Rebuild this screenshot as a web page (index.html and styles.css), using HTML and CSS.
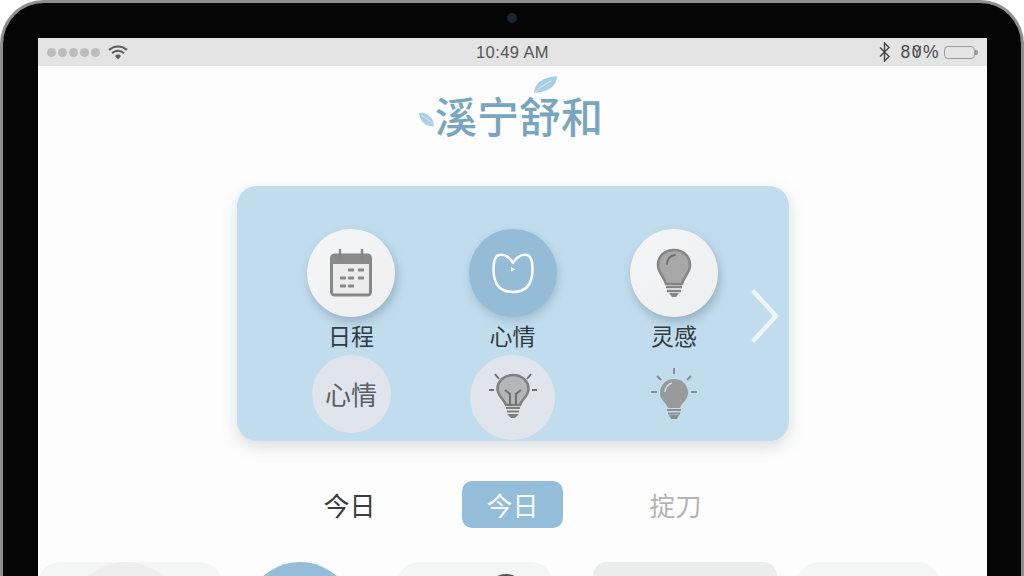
FILE: index.html
```html
<!DOCTYPE html>
<html lang="zh">
<head>
    <meta charset="UTF-8">
    <title>溪宁舒和</title>
    <link rel="stylesheet" href="styles.css">
</head>
<body>
<div class="device">
    <div class="camera"></div>
    <div class="screen">
        <div class="status">
            <div class="status-left">
                <i class="dot"></i><i class="dot"></i><i class="dot"></i><i class="dot"></i><i class="dot"></i>
                <svg class="wifi" width="20" height="15" viewBox="0 0 20 15">
                    <path d="M1 5a13 13 0 0 1 18 0" fill="none" stroke="#5a5a5a" stroke-width="2"/>
                    <path d="M4 8.200a8.800 8.800 0 0 1 12 0" fill="none" stroke="#5a5a5a" stroke-width="2"/>
                    <path d="M7 11a4.400 4.400 0 0 1 6 0l-3 3.400z" fill="#5a5a5a"/>
                </svg>
            </div>
            <div class="time">10:49 AM</div>
            <div class="status-right">
                <svg width="11" height="20" viewBox="0 0 11 20">
                    <path d="M1 5.500l9 9-4.500 4.500V1l4.500 4.500-9 9" fill="none" stroke="#444" stroke-width="1.400"/>
                </svg>
                <span class="percent">80%
                    <svg class="smudge" width="10" height="13" viewBox="0 0 10 13">
                        <path d="M1 1l4 6 4-6M5 7v6" fill="none" stroke="#4a4a4a" stroke-width="1.200"/>
                    </svg>
                </span>
                <div class="battery"></div>
            </div>
        </div>

        <div class="logo">
            <svg class="leaf-top" width="25" height="19" viewBox="0 0 25 19">
                <path d="M1 18C1 9 9 2 24 1c0 9-7 16-23 17z" fill="#a9cfe4"/>
                <path d="M2 17.500C7 12 12 9 18 6" fill="none" stroke="#e4f1f8" stroke-width=".8"/>
            </svg>
            <svg class="leaf-left" width="17" height="15" viewBox="0 0 17 15">
                <path d="M1 1c8-1 14 4 15 13C8 15 2 10 1 1z" fill="#a9cfe4"/>
                <path d="M3 3c5 3 9 6 12 10" fill="none" stroke="#e4f1f8" stroke-width=".7"/>
            </svg>
            溪宁舒和
        </div>

        <div class="panel">
            <div class="features">
                <div class="feature">
                    <div class="circle white">
                        <svg width="44" height="48" viewBox="0 0 44 48">
                            <rect x="2.500" y="6" width="39" height="40" rx="3" fill="#ececec" stroke="#878787" stroke-width="3"/>
                            <path d="M2 9a4 4 0 0 1 4-4h32a4 4 0 0 1 4 4v6H2z" fill="#8a8a8a"/>
                            <path d="M11 1v9M33 1v9" stroke="#878787" stroke-width="2.500" stroke-linecap="round"/>
                            <path d="M19 21h6M29 21h6M11 29h6M19 29h6M29 29h6M11 37h6M19 37h6" stroke="#8a8a8a" stroke-width="3"/>
                        </svg>
                    </div>
                    <div class="label">日程</div>
                </div>
                <div class="feature">
                    <div class="circle blue">
                        <svg width="42" height="42" viewBox="0 0 42 42">
                            <path d="M21 11C18 5 12 2 7 3 3 4 1.500 8 1.500 17 1.500 25 3 31 7 35c4 4 9 5 14 5s10-1 14-5c4-4 5.500-10 5.500-18 0-9-1.500-13-5.500-14-5-1-11 2-14 8z" fill="none" stroke="#fff" stroke-width="2.500" stroke-linejoin="round"/>
                            <path d="M19 15l4 2.500-4 2z" fill="#fff"/>
                        </svg>
                    </div>
                    <div class="label">心情</div>
                </div>
                <div class="feature">
                    <div class="circle white">
                        <svg width="36" height="50" viewBox="0 0 36 50">
                            <path d="M18 2C8 2 2 9 2 17c0 8 6 11 8 19h16c2-8 8-11 8-19C34 9 28 2 18 2z" fill="#a8a8a8" stroke="#858585" stroke-width="2.500"/>
                            <path d="M11 16c0-5 3-8 8-9" fill="none" stroke="#6f6f6f" stroke-width="1.800" stroke-linecap="round"/>
                            <path d="M10 39h16M11 43h14" stroke="#858585" stroke-width="2.500"/>
                            <path d="M13 45h10l-3 4h-4z" fill="#858585"/>
                        </svg>
                    </div>
                    <div class="label">灵感</div>
                </div>
                <div class="feature">
                    <div class="circle faded first">心情</div>
                </div>
                <div class="feature">
                    <div class="circle faded second">
                        <svg width="50" height="50" viewBox="0 0 50 50">
                            <path d="M25 5C16 5 9.500 11 9.500 19c0 7 6.500 10 8.500 16h14c2-6 8.500-9 8.500-16C40.500 11 34 5 25 5z" fill="#b3b7ba" stroke="#7f7f7f" stroke-width="2.500"/>
                            <path d="M22 35V24l-5-4M28 35V24l5-4" fill="none" stroke="#6f6f6f" stroke-width="2"/>
                            <path d="M18 38h14M19 41.500h12" stroke="#7f7f7f" stroke-width="2"/>
                            <path d="M19 44h12l-4 4h-4z" fill="#7f7f7f"/>
                            <path d="M1 20h5M44 20h5M7 4l4 5M43 4l-4 5" stroke="#6f6f6f" stroke-width="2"/>
                        </svg>
                    </div>
                </div>
                <div class="feature">
                    <div class="plain-icon">
                        <svg width="48" height="52" viewBox="0 0 48 52">
                            <path d="M24 11c-8 0-14 6-14 14 0 7 6 9 8 15h12c2-6 8-8 8-15 0-8-6-14-14-14z" fill="#989a9b"/>
                            <path d="M15 24c0-4 3-8 7-9" fill="none" stroke="#d4dde2" stroke-width="1.500"/>
                            <path d="M17 42h14M18 45.500h12" stroke="#8b8d8e" stroke-width="2"/>
                            <path d="M19 47h10l-2 4h-6z" fill="#8b8d8e"/>
                            <path d="M24 0v6M7 8l4 4M41 8l-4 4M1 24h6M41 24h6" stroke="#8b8d8e" stroke-width="2"/>
                        </svg>
                    </div>
                </div>
            </div>
            <svg class="next" width="30" height="56" viewBox="0 0 30 56">
                <path d="M4 4l22 24L4 52" fill="none" stroke="#eef5fa" stroke-width="4.500" stroke-linecap="round" stroke-linejoin="round"/>
            </svg>
        </div>

        <div class="tabs">
            <div class="tab">今日</div>
            <div class="tab active">今日</div>
            <div class="tab muted">掟刀</div>
        </div>

        <div class="cards">
            <div class="card card-a"><div class="card-circle"></div></div>
            <div class="blue-ball"></div>
            <div class="card card-b"><div class="dark-ring"></div></div>
            <div class="card card-c"></div>
            <div class="card card-d"></div>
        </div>
    </div>
</div>
</body>
</html>
```

FILE: styles.css
```css
* {
    padding: 0;
    margin: 0;
    box-sizing: border-box;
}

html, body {
    width: 1024px;
    height: 576px;
    overflow: hidden;
    background: #fff;
}

body {
    font-family: "Noto Sans CJK SC", "Liberation Sans", sans-serif;
}

.device {
    position: relative;
    width: 1024px;
    height: 576px;
    padding: 35px 34px 0 35px;
    background: #050505;
    border: 3px solid #8f8f8f;
    border-bottom: 0;
    border-radius: 44px 44px 0 0;
}

.camera {
    position: absolute;
    left: 504px;
    top: 10px;
    width: 10px;
    height: 10px;
    border-radius: 50%;
    background: #1d2530;
}

.screen {
    height: 538px;
    overflow: hidden;
    background: #fdfdfd;
}

/* status bar */
.status {
    display: grid;
    grid-template-columns: 1fr auto 1fr;
    align-items: center;
    height: 28px;
    padding: 0 9px;
    background: #e4e4e4;
    color: #555;
    font-family: "Liberation Sans", sans-serif;
}

.status-left {
    display: flex;
    align-items: center;
    gap: 2px;
}

.dot {
    width: 9px;
    height: 9px;
    border-radius: 50%;
    background: #bdbdbd;
}

.wifi {
    margin-left: 6px;
}

.time {
    font-size: 16.500px;
    letter-spacing: .4px;
}

.status-right {
    display: flex;
    align-items: center;
    justify-content: flex-end;
}

.percent {
    position: relative;
    margin-left: 10px;
    font-size: 17.500px;
    letter-spacing: 1.500px;
    color: #4a4a4a;
}

.smudge {
    position: absolute;
    left: 12px;
    top: 3px;
}

.battery {
    position: relative;
    width: 31px;
    height: 13px;
    margin: 0 3px 0 4px;
    border: 1px solid #9a9a9a;
    border-radius: 4px;
}

.battery::after {
    content: "";
    position: absolute;
    right: -4px;
    top: 3px;
    width: 3px;
    height: 5px;
    background: #9a9a9a;
    border-radius: 0 2px 2px 0;
}

/* logo */
.logo {
    position: relative;
    width: 168px;
    margin: 18px 0 0 397px;
    font-size: 42px;
    font-weight: 500;
    line-height: 62px;
    white-space: nowrap;
    color: #78a5c0;
}

.leaf-top {
    position: absolute;
    left: 98px;
    top: -9px;
}

.leaf-left {
    position: absolute;
    left: -17px;
    top: 28px;
}

/* panel */
.panel {
    position: relative;
    width: 552px;
    height: 255px;
    margin: 40px 0 0 199px;
    padding-top: 43px;
    border-radius: 20px;
    background: #c1dced;
    box-shadow: 0 6px 16px rgba(90, 110, 125, .22);
}

.features {
    display: grid;
    grid-template-columns: repeat(3, 88px);
    column-gap: 73.500px;
    justify-content: center;
    justify-items: center;
    margin-left: -1px;
}

.feature {
    display: flex;
    flex-direction: column;
    align-items: center;
}

.circle {
    display: flex;
    align-items: center;
    justify-content: center;
    width: 88px;
    height: 88px;
    border-radius: 50%;
}

.white {
    background: linear-gradient(135deg, #f6f6f7, #eceef0);
    box-shadow: 2px 5px 10px rgba(70, 100, 120, .35);
}

.blue {
    background: #94bcd6;
    box-shadow: 1px 4px 9px rgba(70, 100, 120, .25);
}

.label {
    padding-bottom: 2px;
    font-size: 23px;
    line-height: 36px;
    color: #333b42;
}

.faded {
    background: #dfe5ea;
}

.first {
    width: 79px;
    height: 78px;
    padding-bottom: 2px;
    font-size: 26px;
    color: #5a6065;
}

.second {
    width: 85px;
    height: 85px;
}

.second svg {
    margin-top: -5px;
}

.plain-icon {
    padding-top: 13px;
}

.next {
    position: absolute;
    right: 9px;
    top: 102px;
}

/* tabs */
.tabs {
    display: grid;
    grid-template-columns: repeat(3, 101px);
    column-gap: 62px;
    justify-content: center;
    justify-items: center;
    align-items: center;
    height: 47px;
    margin-top: 40px;
}

.tab {
    width: 101px;
    font-size: 26px;
    line-height: 47px;
    text-align: center;
    color: #3a3d40;
}

.active {
    background: #93bdd8;
    border-radius: 10px;
    color: #f7fbfd;
}

.muted {
    color: #b4b4b4;
}

/* bottom row, cut off by the window */
.cards {
    display: flex;
    height: 14px;
    overflow: hidden;
    margin-top: 34px;
}

.card {
    position: relative;
    flex: none;
    height: 80px;
    border-radius: 22px;
    background: #f4f5f5;
}

.card-a {
    width: 184px;
}

.card-circle {
    width: 110px;
    height: 110px;
    margin-left: 33px;
    border-radius: 50%;
    background: #eeeeee;
}

.blue-ball {
    flex: none;
    width: 110px;
    height: 110px;
    margin-left: 23px;
    border-radius: 50%;
    background: #93bdd8;
}

.card-b {
    width: 156px;
    margin-left: 42px;
}

.dark-ring {
    position: absolute;
    left: 89px;
    top: 12px;
    width: 40px;
    height: 40px;
    border: 2px solid #555;
    border-radius: 50%;
}

.card-c {
    width: 184px;
    margin-left: 40px;
    border-radius: 14px;
    background: #ebecec;
}

.card-d {
    width: 143px;
    margin-left: 20px;
}
```
